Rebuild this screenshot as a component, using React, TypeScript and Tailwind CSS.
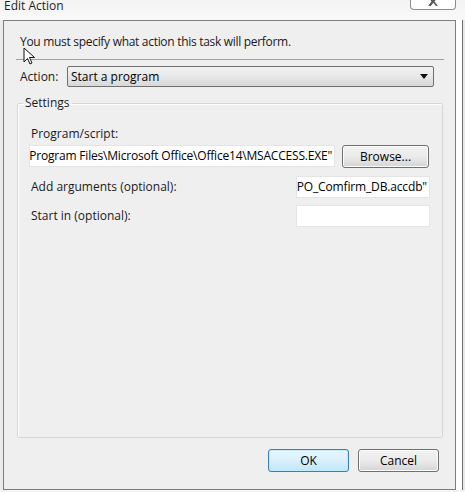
import React from 'react';

const font = { fontFamily: '"Open Sans", "Noto Sans", Arial, sans-serif' };

const TextField: React.FC<{ value?: string; className?: string; align?: 'left' | 'right' }> = ({ value, className = '', align = 'left' }) => (
  <div
    className={`h-[22px] bg-white border border-[#e4e4e4] overflow-hidden whitespace-nowrap flex items-center text-[12px] text-black ${
      align === 'right' ? 'justify-end pr-[2px]' : 'justify-start'
    } ${className}`}
  >
    {value}
  </div>
);

const WinButton: React.FC<{ label: string; primary?: boolean; className?: string }> = ({ label, primary, className = '' }) => (
  <div
    className={`h-[23px] rounded-[3px] border flex items-center justify-center text-[12px] text-black ${
      primary
        ? 'border-[#3c7fb1] bg-gradient-to-b from-[#eaf6fd] via-[#d9f0fc] to-[#bee6fd] shadow-[inset_0_0_0_1px_#c8e8f8]'
        : 'border-[#707070] bg-gradient-to-b from-[#f2f2f2] via-[#ebebeb] to-[#d5d5d5] shadow-[inset_0_0_0_1px_#fbfbfb]'
    } ${className}`}
  >
    {label}
  </div>
);

const Cursor = () => (
  <svg className="absolute left-[23px] top-[47px]" width="13" height="18" viewBox="0 0 13 18">
    <path d="M1 1 L1 15 L4.5 11.5 L7 17 L9 16 L6.5 10.5 L11.5 10.5 Z" fill="#fff" stroke="#111" strokeWidth="1" strokeLinejoin="round" />
  </svg>
);

export default function App() {
  return (
    <div className="relative w-[465px] h-[492px] overflow-hidden bg-[#f4f4f4]" style={font}>
      {/* title strip */}
      <div className="flex h-[20px] bg-gradient-to-b from-[#f3f3f3] to-[#f9f9f9]">
        <div className="pl-[4px] text-[12px] leading-[12px] text-[#1e1e1e]">Edit Action</div>
        <div className="ml-auto mr-[9px] w-[46px] h-[11px] -mt-[1px] border border-t-0 border-[#8c8c8c] rounded-b-[4px] bg-white flex justify-center overflow-hidden">
          <svg width="12" height="10" viewBox="0 0 12 10" className="-mt-[3px]">
            <path d="M1 0 L6 6 L11 0 M1 12 L6 6" stroke="#555" strokeWidth="1.6" fill="none" />
            <path d="M2 10 L6 5 L10 10" stroke="#555" strokeWidth="1.6" fill="none" />
          </svg>
        </div>
      </div>

      <div className="flex h-[470px]">
        <div className="w-[3px] bg-[#ebebeb]" />
        {/* dialog panel */}
        <div className="w-[453px] h-[470px] border border-[#7d7d7d] bg-[#f0eff0] flex flex-col">
          <div className="pl-[16px] pt-[13px] text-[12px] leading-[15px] text-[#1a1a1a] tracking-[-0.3px]">
            You must specify what action this task will perform.
          </div>
          <div className="ml-[12px] mr-[11px] mt-[10px] h-px bg-[#a0a0a0]" />
          <div className="flex items-center mt-[6px] pl-[16px]">
            <span className="text-[12px] w-[47px] text-[#1a1a1a]">Action:</span>
            <div className="w-[367px] h-[21px] rounded-[2px] border border-[#707070] bg-gradient-to-b from-[#f2f2f2] via-[#e8e8e8] to-[#d8d8d8] flex items-center pl-[3px] pr-[5px] text-[12px] text-black">
              <span>Start a program</span>
              <svg className="ml-auto" width="8" height="5" viewBox="0 0 8 5">
                <path d="M0 0 H8 L4 5 Z" fill="#111" />
              </svg>
            </div>
          </div>

          <fieldset className="ml-[13px] mr-[12px] mt-[9px] h-[342px] border border-[#d6d6d6] rounded-[2px] shadow-[inset_1px_1px_0_#fff] pl-[13px] pr-[12px]">
            <legend className="-ml-[8px] px-[2px] text-[12px] leading-[14px] text-[#1a1a1a]">Settings</legend>
            <div className="pt-[16px] text-[12px] leading-[15px] text-[#1a1a1a]">Program/script:</div>
            <div className="flex mt-[4px] gap-[7px] -ml-[2px]">
              <TextField
                className="w-[306px] pl-0 justify-end pr-[1px] tracking-[-0.2px]"
                value={'C:\\Program Files\\Microsoft Office\\Office14\\MSACCESS.EXE"'}
                align="right"
              />
              <WinButton label="Browse..." className="w-[87px] h-[22px]" />
            </div>
            <div className="flex items-center mt-[8px]">
              <span className="text-[12px] text-[#1a1a1a]">Add arguments (optional):</span>
              <TextField
                className="ml-auto w-[134px] tracking-[-0.15px]"
                value={'"C:\\Databases\\PO_Comfirm_DB.accdb"'}
                align="right"
              />
            </div>
            <div className="flex items-center mt-[7px]">
              <span className="text-[12px] text-[#1a1a1a]">Start in (optional):</span>
              <TextField className="ml-auto w-[134px]" />
            </div>
          </fieldset>

          <div className="flex justify-end gap-[9px] mt-[11px] pr-[16px]">
            <WinButton label="OK" primary className="w-[81px]" />
            <WinButton label="Cancel" className="w-[81px]" />
          </div>
        </div>
        <div className="w-[6px] bg-white" />
        <div className="w-px bg-[#6f6f6f]" />
        <div className="flex-1 bg-[#e9e9e9]" />
      </div>
      <Cursor />
    </div>
  );
}
